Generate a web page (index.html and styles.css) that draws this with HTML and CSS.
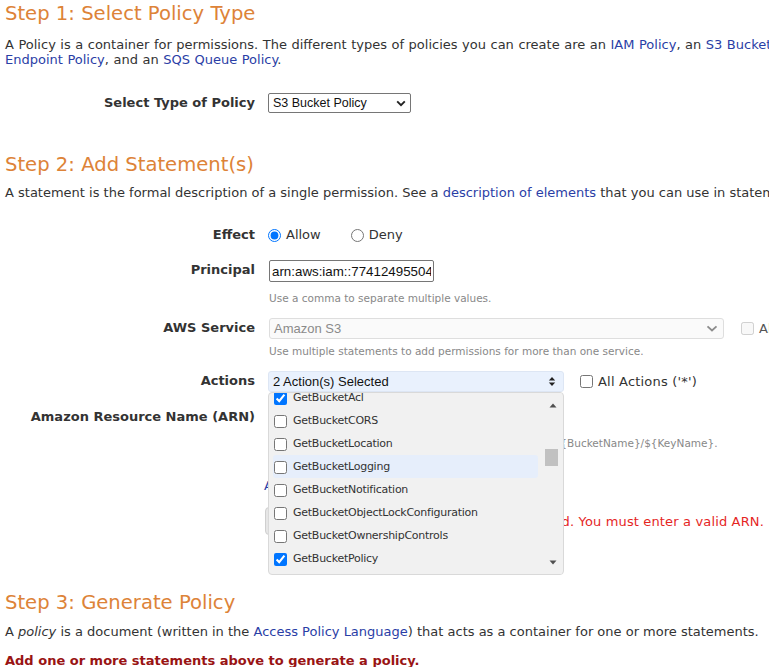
FILE: index.html
```html
<!DOCTYPE html>
<html lang="en">
<head>
<meta charset="utf-8">
<title>AWS Policy Generator</title>
<link rel="stylesheet" href="styles.css">
</head>
<body>
<main class="page">
  <section class="section">
    <h2 class="step step-one">Step 1: Select Policy Type</h2>
    <p class="desc desc-one">A Policy is a container for permissions. The different types of policies you can create are an <a href="#">IAM Policy</a>, an <a href="#">S3 Bucket Policy</a>, an <a href="#">SNS Topic Policy</a>, a <a href="#">VPC<br>Endpoint Policy</a>, and an <a href="#">SQS Queue Policy</a>.</p>
    <div class="row row-type">
      <div class="label">Select Type of Policy</div>
      <div class="field">
        <div class="select select-type">
          <span>S3 Bucket Policy</span>
          <svg class="chev" width="10" height="7" viewBox="0 0 10 7"><path d="M1.2 1.4L5 5.2L8.8 1.4" fill="none" stroke="#222" stroke-width="1.9"/></svg>
        </div>
      </div>
    </div>
  </section>

  <section class="section">
    <h2 class="step step-two">Step 2: Add Statement(s)</h2>
    <p class="desc desc-two">A statement is the formal description of a single permission. See a <a href="#">description of elements</a> that you can use in statements.</p>

    <div class="row row-effect">
      <div class="label">Effect</div>
      <div class="field radios">
        <label class="radio radio-allow"><input type="radio" name="effect" checked><span>Allow</span></label>
        <label class="radio"><input type="radio" name="effect"><span>Deny</span></label>
      </div>
    </div>

    <div class="row row-principal">
      <div class="label">Principal</div>
      <div class="field">
        <input class="text-input" type="text" value="arn:aws:iam::774124955042:user/admin">
        <div class="help help-principal">Use a comma to separate multiple values.</div>
      </div>
    </div>

    <div class="row row-service">
      <div class="label">AWS Service</div>
      <div class="field">
        <div class="inline">
          <div class="select select-service">
            <span>Amazon S3</span>
            <svg class="chev" width="12" height="7" viewBox="0 0 12 7"><path d="M1.5 1.3L6 5.5L10.5 1.3" fill="none" stroke="#8c8c8c" stroke-width="1.8"/></svg>
          </div>
          <label class="check check-service"><input type="checkbox" disabled><span>All Services ('*')</span></label>
        </div>
        <div class="help help-service">Use multiple statements to add permissions for more than one service.</div>
      </div>
    </div>

    <div class="row row-actions">
      <div class="label">Actions</div>
      <div class="field">
        <div class="inline">
          <div class="actions-wrap">
            <div class="select select-actions">
              <span>2 Action(s) Selected</span>
              <svg class="updown" width="8" height="11" viewBox="0 0 8 11"><path d="M4 1L7.2 4.6H0.8Z M4 10L0.8 6.4H7.2Z" fill="#222"/></svg>
            </div>
            <div class="dropdown">
              <ul class="options">
                <li class="option"><input type="checkbox" checked><span>GetBucketAcl</span></li>
                <li class="option"><input type="checkbox"><span>GetBucketCORS</span></li>
                <li class="option"><input type="checkbox"><span>GetBucketLocation</span></li>
                <li class="option option-hover"><input type="checkbox"><span>GetBucketLogging</span></li>
                <li class="option"><input type="checkbox"><span>GetBucketNotification</span></li>
                <li class="option"><input type="checkbox"><span>GetBucketObjectLockConfiguration</span></li>
                <li class="option"><input type="checkbox"><span>GetBucketOwnershipControls</span></li>
                <li class="option"><input type="checkbox" checked><span>GetBucketPolicy</span></li>
                <li class="option"><input type="checkbox"><span>GetBucketPolicyStatus</span></li>
              </ul>
              <div class="scrollbar">
                <div class="sb-btn"><svg width="8" height="5" viewBox="0 0 8 5"><path d="M4 0.5L7.5 4.5H0.5Z" fill="#505050"/></svg></div>
                <div class="sb-track"><div class="sb-thumb"></div></div>
                <div class="sb-btn"><svg width="8" height="5" viewBox="0 0 8 5"><path d="M4 4.5L0.5 0.5H7.5Z" fill="#505050"/></svg></div>
              </div>
            </div>
          </div>
          <label class="check check-actions"><input type="checkbox"><span>All Actions ('*')</span></label>
        </div>
      </div>
    </div>

    <div class="row row-arn">
      <div class="label">Amazon Resource Name (ARN)</div>
      <div class="field">
        <input class="text-input" type="text" value="">
        <div class="help help-arn">ARN should follow the following format: arn:aws:s3:::${BucketName}/${KeyName}.</div>
      </div>
    </div>

    <div class="row row-link">
      <div class="label"></div>
      <div class="field"><a href="#" class="add-cond">Add Conditions (Optional)</a></div>
    </div>

    <div class="row row-button">
      <div class="label"></div>
      <div class="field button-line">
        <button class="btn" type="button">Add Statement</button>
        <span class="error">ARN is not valid. You must enter a valid ARN.</span>
      </div>
    </div>
  </section>

  <section class="section">
    <h2 class="step step-three">Step 3: Generate Policy</h2>
    <p class="desc desc-three">A <em>policy</em> is a document (written in the <a href="#">Access Policy Language</a>) that acts as a container for one or more statements.</p>
    <p class="notice">Add one or more statements above to generate a policy.</p>
  </section>
</main>
</body>
</html>
```

FILE: styles.css
```css
html {
  overflow: hidden;
}

body {
  margin: 0;
  background: #ffffff;
  color: #333333;
  font-family: "DejaVu Sans", Verdana, sans-serif;
  font-size: 13px;
}

.page {
  width: 1100px;
  padding: 0 5px;
}

a {
  color: #2a3ea6;
  text-decoration: none;
}

.step {
  margin: 0;
  font-size: 19.6px;
  font-weight: normal;
  line-height: 24px;
  color: #dd8338;
}

.step-one { margin-top: 2px; }
.step-two { margin-top: 40px; }
.step-three { margin-top: 56px; }

.desc {
  margin: 0;
  line-height: 15px;
}

.desc-one {
  margin-top: 11px;
  word-spacing: 0.4px;
}
.desc-two { margin-top: 8px; }
.desc-three { margin-top: 9px; }

.notice {
  margin: 14px 0 0;
  line-height: 15px;
  font-weight: bold;
  color: #991414;
}

/* form rows */
.row {
  display: flex;
  align-items: flex-start;
}

.label {
  flex: none;
  width: 250px;
  padding-top: 1px;
  text-align: right;
  font-weight: bold;
  line-height: 18px;
  color: #333333;
}

.field {
  margin-left: 13px;
  font-size: 13px;
}

.row-type { margin-top: 26px; }
.row-effect { margin-top: 25px; }
.row-principal { margin-top: 16px; }
.row-service { margin-top: 13px; }
.row-actions { margin-top: 13px; }
.row-arn { margin-top: 15px; }
.row-link { margin-top: 28px; }
.row-button { margin-top: 14px; }

.inline {
  display: flex;
  align-items: center;
}

/* fake selects */
.select {
  box-sizing: border-box;
  display: flex;
  align-items: center;
  justify-content: space-between;
  font-family: "Liberation Sans", Arial, sans-serif;
}

.select-type {
  width: 143px;
  height: 20px;
  padding: 0 4px 0 4px;
  border: 1px solid #767676;
  border-radius: 2px;
  font-size: 12.5px;
  color: #111111;
}

.select-service {
  width: 455px;
  height: 21px;
  margin-left: 1px;
  padding: 0 5px 0 4px;
  border: 1px solid #dedede;
  border-radius: 3px;
  background: #fafafa;
  font-size: 13px;
  color: #8a8a8a;
}

.select-actions {
  width: 296px;
  height: 21px;
  padding: 0 7px 0 4px;
  border: 1px solid #dde6f4;
  border-radius: 3px;
  background: #e9f1fd;
  font-size: 13px;
  color: #111111;
}

/* radios */
.radios {
  display: flex;
  line-height: 18px;
  padding-top: 1px;
}

.radio {
  display: flex;
  align-items: center;
}

.radio input {
  width: 13px;
  height: 13px;
  margin: 0 5px 0 0;
}

.radio-allow {
  margin-right: 30px;
}

/* text input */
.text-input {
  box-sizing: border-box;
  display: block;
  width: 165px;
  height: 22px;
  margin: 0 0 0 1px;
  padding: 0 2px;
  border: 1px solid #767676;
  border-radius: 2px;
  font-family: "Liberation Sans", Arial, sans-serif;
  font-size: 13.33px;
  color: #111111;
  background: #ffffff;
}

.help {
  font-size: 10.5px;
  line-height: 13px;
  color: #888888;
  margin-left: 1px;
}

.help-principal { margin-top: 10px; }
.help-service { margin-top: 6px; }
.help-arn {
  margin-top: 8px;
  margin-left: 7px;
}

/* checkboxes next to selects */
.check {
  display: flex;
  align-items: center;
  line-height: 18px;
}

.check input {
  width: 13px;
  height: 13px;
  margin: 0 5px 0 0;
}

.check-service {
  margin-left: 17px;
  color: #555555;
}

.check-actions {
  margin-left: 16px;
  letter-spacing: 0.2px;
}

/* actions dropdown */
.actions-wrap {
  position: relative;
}

.dropdown {
  position: absolute;
  top: 100%;
  left: 0;
  z-index: 5;
  box-sizing: border-box;
  width: 296px;
  height: 183px;
  display: flex;
  border: 1px solid #d9d9d9;
  border-radius: 4px;
  background: #f1f1f1;
  overflow: hidden;
}

.options {
  flex: 1;
  list-style: none;
  margin: -7px 0 0;
  padding: 0 0 0 4px;
  overflow: hidden;
}

.option {
  display: flex;
  align-items: center;
  width: 265px;
  height: 23px;
  border-radius: 3px;
  font-size: 11px;
  letter-spacing: -0.25px;
  color: #333333;
}

.option input {
  width: 13px;
  height: 13px;
  margin: 1px 6px 0 1px;
}

.option-hover {
  background: #e6eefb;
}

.scrollbar {
  flex: none;
  width: 18px;
  margin-right: 1px;
  display: flex;
  flex-direction: column;
  background: #f1f1f1;
}

.sb-btn {
  height: 24px;
  display: flex;
  align-items: center;
  justify-content: center;
}

.sb-track {
  flex: 1;
}

.sb-thumb {
  width: 13px;
  height: 17px;
  margin: 32px 0 0 1px;
  background: #c1c1c1;
}

/* conditions link & button */
.add-cond {
  display: block;
  margin-left: -4px;
  line-height: 15px;
}

.button-line {
  width: 496px;
  display: flex;
  align-items: center;
  justify-content: space-between;
}

.btn {
  height: 28px;
  margin-left: -3px;
  padding: 0 12px;
  border: 1px solid #cfcfcf;
  border-radius: 4px;
  background: #e6e6e6;
  font-family: "DejaVu Sans", Verdana, sans-serif;
  font-size: 13px;
  color: #333333;
}

.error {
  color: #e5261f;
  line-height: 15px;
  letter-spacing: 0.15px;
}
```
